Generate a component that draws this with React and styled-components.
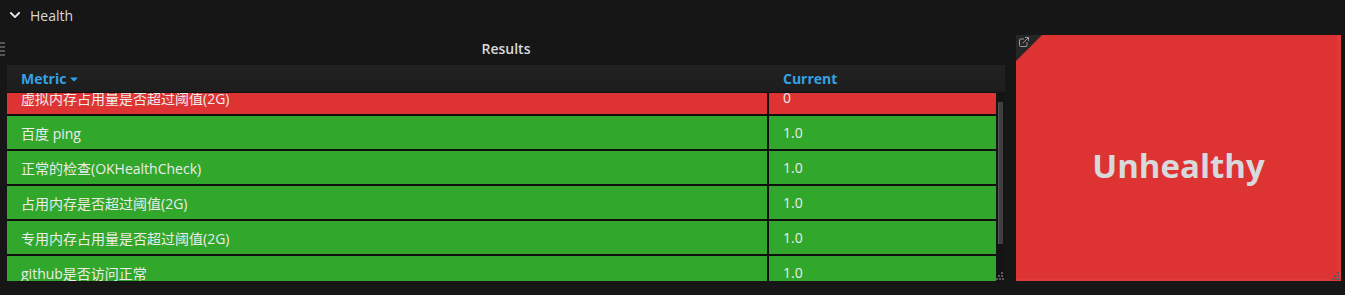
import React from 'react';
import styled, { createGlobalStyle } from 'styled-components';
import { FaChevronDown, FaCaretDown } from 'react-icons/fa';
import { ExternalLink } from 'lucide-react';

const Global = createGlobalStyle`
  html, body { margin: 0; padding: 0; background: #161616; }
  body { font-family: "Open Sans", "Noto Sans CJK SC", sans-serif; color: #d8d9da; }
`;

const Page = styled.div`
  width: 1345px;
  height: 295px;
  overflow: hidden;
  background: #161616;
  display: flex;
  flex-direction: column;
`;

const RowHeader = styled.div`
  height: 30px;
  margin-bottom: 5px;
  display: flex;
  align-items: center;
  gap: 9px;
  padding-left: 9px;
  font-size: 14px;
  color: #d8d9da;
`;

const PanelsRow = styled.div`
  height: 246px;
  display: flex;
  padding-right: 4px;
`;

const DragHandle = styled.div`
  width: 7px;
  padding-top: 4px;
  flex: none;
`;

const LeftPanel = styled.div`
  position: relative;
  width: 998px;
  flex: none;
  display: flex;
  flex-direction: column;
`;

const PanelTitle = styled.div`
  height: 26px;
  padding-bottom: 4px;
  display: flex;
  align-items: center;
  justify-content: center;
  font-size: 14px;
  font-weight: 600;
  color: #d8d9da;
`;

const TableHead = styled.div`
  height: 27px;
  background: linear-gradient(#222222, #1d1d1d);
  display: grid;
  grid-template-columns: 760px 1fr;
  column-gap: 2px;
  align-items: center;
  padding-right: 2px;
`;

const HeadCell = styled.div`
  padding-left: 14px;
  font-size: 14px;
  font-weight: 700;
  color: #33a2e5;
  display: flex;
  align-items: center;
  gap: 2px;
`;

const Body = styled.div`
  height: 189px;
  display: flex;
  background: #141414;
`;

const Viewport = styled.div`
  width: 989px;
  overflow: hidden;
  border-top: 1px solid #101010;
`;

const Rows = styled.div`
  margin-top: -12px;
`;

const Row = styled.div`
  display: grid;
  grid-template-columns: 760px 1fr;
  column-gap: 2px;
  background: #101010;
  border-bottom: 2px solid #101010;
`;

const Cell = styled.div`
  height: 33px;
  display: flex;
  align-items: center;
  padding-left: 14px;
  font-size: 14px;
  color: #ececec;
  white-space: nowrap;
  background: ${p => (p.$bad ? '#de3333' : '#31a72c')};
`;

const Track = styled.div`
  width: 9px;
  flex: none;
`;

const Thumb = styled.div`
  margin: 10px 0 0 2px;
  width: 5px;
  height: 142px;
  background: #3f3f3f;
  border-left: 1px solid #555;
  box-sizing: border-box;
`;

const RightPanel = styled.div`
  position: relative;
  margin-left: 11px;
  width: 325px;
  flex: none;
  background: #de3333;
  box-shadow: inset -4px -2px 0 rgba(255, 255, 255, 0.04);
  display: flex;
  align-items: center;
  justify-content: center;
  padding-top: 14px;
  box-sizing: border-box;
`;

const BigValue = styled.div`
  font-size: 33px;
  font-weight: 700;
  color: #d8d9da;
`;

const Corner = styled.div`
  position: absolute;
  top: 0;
  left: 0;
  width: 0;
  height: 0;
  border-top: 26px solid #262626;
  border-right: 26px solid transparent;
`;

const CornerIcon = styled.div`
  position: absolute;
  top: 1px;
  left: 2px;
  color: #9a9a9a;
  display: flex;
`;

const Resize = styled.div`
  position: absolute;
  right: ${p => p.$r}px;
  bottom: 0;
  display: flex;
`;

const ResizeMark = ({ r }) => (
  <Resize $r={r}>
    <svg width="8" height="9" viewBox="0 0 8 9">
      <g fill="#5a5a5a">
        <rect x="5" y="0" width="2" height="2" />
        <rect x="2" y="3" width="2" height="2" />
        <rect x="5" y="3" width="2" height="2" />
        <rect x="0" y="6" width="2" height="2" />
        <rect x="3" y="6" width="2" height="2" />
        <rect x="6" y="6" width="2" height="2" />
      </g>
    </svg>
  </Resize>
);

const rows = [
  { name: '虚拟内存占用量是否超过阈值(2G)', value: '0', bad: true },
  { name: '百度 ping', value: '1.0' },
  { name: '正常的检查(OKHealthCheck)', value: '1.0' },
  { name: '占用内存是否超过阈值(2G)', value: '1.0' },
  { name: '专用内存占用量是否超过阈值(2G)', value: '1.0' },
  { name: 'github是否访问正常', value: '1.0' },
];

export default function App() {
  return (
    <Page>
      <Global />
      <RowHeader>
        <FaChevronDown size={12} color="#e6e6e6" />
        <span>Health</span>
      </RowHeader>
      <PanelsRow>
        <DragHandle>
          <svg width="5" height="14" viewBox="0 0 5 14">
            <g fill="#555">
              <rect x="0" y="0" width="5" height="2" />
              <rect x="0" y="4" width="5" height="2" />
              <rect x="0" y="8" width="5" height="2" />
              <rect x="0" y="12" width="5" height="2" />
            </g>
          </svg>
        </DragHandle>
        <LeftPanel>
          <PanelTitle>Results</PanelTitle>
          <TableHead>
            <HeadCell>
              Metric <FaCaretDown size={12} />
            </HeadCell>
            <HeadCell>Current</HeadCell>
          </TableHead>
          <Body>
            <Viewport>
              <Rows>
                {rows.map(r => (
                  <Row key={r.name}>
                    <Cell $bad={r.bad}>{r.name}</Cell>
                    <Cell $bad={r.bad}>{r.value}</Cell>
                  </Row>
                ))}
              </Rows>
            </Viewport>
            <Track>
              <Thumb />
            </Track>
          </Body>
          <ResizeMark r={1} />
        </LeftPanel>
        <RightPanel>
          <Corner />
          <CornerIcon>
            <ExternalLink size={12} strokeWidth={2} />
          </CornerIcon>
          <BigValue>Unhealthy</BigValue>
          <ResizeMark r={1} />
        </RightPanel>
      </PanelsRow>
    </Page>
  );
}
